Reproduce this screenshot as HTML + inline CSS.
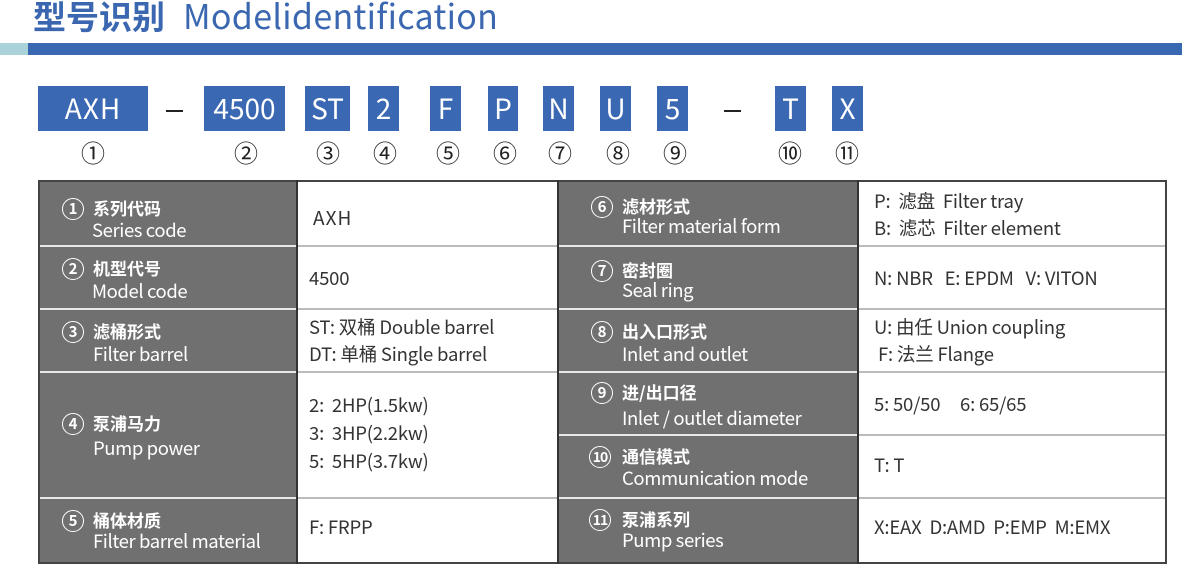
<!DOCTYPE html>
<html><head><meta charset="utf-8"><style>
*{margin:0;padding:0;box-sizing:border-box}
body{width:1182px;height:564px;background:#fff;position:relative;overflow:hidden;font-family:"Noto Sans CJK SC","Liberation Sans",sans-serif;color:#222}
.a{position:absolute;white-space:nowrap}
.box{position:absolute;top:86px;height:45px;background:#3a68b2;color:#fff;font-size:28px;line-height:45px;text-align:center}
.num{position:absolute;top:139px;font-size:24px;color:#222;line-height:26px}
.g{position:absolute;background:#707070;border-bottom:2px solid #e8e8e8}
.w{position:absolute;background:#fff;border-bottom:2px solid #bbb}
.c{position:absolute;width:22px;height:22px;border:1.2px solid #fff;border-radius:50%;color:#fff;font-size:15px;font-weight:bold;line-height:20px;text-align:center}
.zh{position:absolute;color:#fff;font-size:17px;font-weight:bold;line-height:20px}
.en{position:absolute;color:#fff;font-size:18.5px;line-height:20px;letter-spacing:-0.4px}
.t{position:absolute;font-size:18.5px;color:#333;line-height:27px;letter-spacing:-0.2px}
</style></head><body>
<div class="a" style="left:33px;top:-6px;font-size:33px;font-weight:bold;color:#3a67b0;line-height:42px">型号识别</div>
<div class="a" style="left:183px;top:-7px;font-size:34px;color:#3a67b0;line-height:44px;letter-spacing:0.3px">Modelidentification</div>
<div class="a" style="left:0;top:43px;width:28px;height:12px;background:#a9d3d9"></div>
<div class="a" style="left:28px;top:43px;width:1154px;height:12px;background:#3868b2"></div>

<div class="box" style="left:38px;width:110px;letter-spacing:1px">AXH</div>
<div class="a" style="left:166px;top:110px;width:17px;height:2px;background:#222"></div>
<div class="box" style="left:204px;width:81px">4500</div>
<div class="box" style="left:305px;width:45px">ST</div>
<div class="box" style="left:368px;width:31px">2</div>
<div class="box" style="left:430px;width:31px">F</div>
<div class="box" style="left:488px;width:30px">P</div>
<div class="box" style="left:543px;width:31px">N</div>
<div class="box" style="left:600px;width:31px">U</div>
<div class="box" style="left:657px;width:31px">5</div>
<div class="a" style="left:724px;top:110px;width:17px;height:2px;background:#222"></div>
<div class="box" style="left:775px;width:31px">T</div>
<div class="box" style="left:832px;width:31px">X</div>

<div class="num" style="left:81px">①</div>
<div class="num" style="left:234px">②</div>
<div class="num" style="left:316px">③</div>
<div class="num" style="left:373px">④</div>
<div class="num" style="left:436px">⑤</div>
<div class="num" style="left:493px">⑥</div>
<div class="num" style="left:548px">⑦</div>
<div class="num" style="left:606px">⑧</div>
<div class="num" style="left:663px">⑨</div>
<div class="num" style="left:778px">⑩</div>
<div class="num" style="left:835px">⑪</div>

<div class="a" style="left:38px;top:180px;width:1129px;height:384px;border:2px solid #444;background:#fff"></div>

<div class="g" style="left:40px;top:182px;width:256px;height:65px"></div>
<div class="g" style="left:40px;top:247px;width:256px;height:63px"></div>
<div class="g" style="left:40px;top:310px;width:256px;height:63px"></div>
<div class="g" style="left:40px;top:373px;width:256px;height:126px"></div>
<div class="g" style="left:40px;top:499px;width:256px;height:63px;border-bottom:none"></div>
<div class="a" style="left:296px;top:180px;width:2px;height:384px;background:#333"></div>
<div class="w" style="left:298px;top:182px;width:259px;height:65px"></div>
<div class="w" style="left:298px;top:247px;width:259px;height:63px"></div>
<div class="w" style="left:298px;top:310px;width:259px;height:63px"></div>
<div class="w" style="left:298px;top:373px;width:259px;height:126px"></div>
<div class="a" style="left:557px;top:180px;width:2px;height:384px;background:#333"></div>
<div class="g" style="left:559px;top:182px;width:298px;height:65px"></div>
<div class="g" style="left:559px;top:247px;width:298px;height:63px"></div>
<div class="g" style="left:559px;top:310px;width:298px;height:63px"></div>
<div class="g" style="left:559px;top:373px;width:298px;height:63px"></div>
<div class="g" style="left:559px;top:436px;width:298px;height:63px"></div>
<div class="g" style="left:559px;top:499px;width:298px;height:63px;border-bottom:none"></div>
<div class="a" style="left:857px;top:180px;width:2px;height:384px;background:#333"></div>
<div class="w" style="left:859px;top:182px;width:306px;height:65px"></div>
<div class="w" style="left:859px;top:247px;width:306px;height:63px"></div>
<div class="w" style="left:859px;top:310px;width:306px;height:63px"></div>
<div class="w" style="left:859px;top:373px;width:306px;height:63px"></div>
<div class="w" style="left:859px;top:436px;width:306px;height:63px"></div>

<div class="c" style="left:62px;top:198px">1</div><div class="zh" style="left:93px;top:198px">系列代码</div><div class="en" style="left:92px;top:220px">Series code</div>
<div class="c" style="left:62px;top:258px">2</div><div class="zh" style="left:93px;top:258px">机型代号</div><div class="en" style="left:92px;top:281px">Model code</div>
<div class="c" style="left:62px;top:321px">3</div><div class="zh" style="left:93px;top:321px">滤桶形式</div><div class="en" style="left:93px;top:344px">Filter barrel</div>
<div class="c" style="left:62px;top:413px">4</div><div class="zh" style="left:93px;top:413px">泵浦马力</div><div class="en" style="left:93px;top:438px">Pump power</div>
<div class="c" style="left:62px;top:510px">5</div><div class="zh" style="left:93px;top:510px">桶体材质</div><div class="en" style="left:93px;top:531px">Filter barrel material</div>

<div class="t" style="left:313px;top:204px;font-size:19px;letter-spacing:1px">AXH</div>
<div class="t" style="left:309px;top:265px">4500</div>
<div class="t" style="left:309px;top:314px">ST: 双桶 Double barrel</div>
<div class="t" style="left:309px;top:341px">DT: 单桶 Single barrel</div>
<div class="t" style="left:309px;top:392px">2:&nbsp; 2HP(1.5kw)</div>
<div class="t" style="left:309px;top:420px">3:&nbsp; 3HP(2.2kw)</div>
<div class="t" style="left:309px;top:448px">5:&nbsp; 5HP(3.7kw)</div>
<div class="t" style="left:309px;top:514px">F: FRPP</div>

<div class="c" style="left:591px;top:196px">6</div><div class="zh" style="left:622px;top:196px">滤材形式</div><div class="en" style="left:622px;top:216px">Filter material form</div>
<div class="c" style="left:591px;top:260px">7</div><div class="zh" style="left:622px;top:260px">密封圈</div><div class="en" style="left:622px;top:280px">Seal ring</div>
<div class="c" style="left:591px;top:321px">8</div><div class="zh" style="left:622px;top:321px">出入口形式</div><div class="en" style="left:622px;top:344px">Inlet and outlet</div>
<div class="c" style="left:591px;top:382px">9</div><div class="zh" style="left:622px;top:382px">进/出口径</div><div class="en" style="left:622px;top:408px">Inlet / outlet diameter</div>
<div class="c" style="left:589px;top:446px;font-size:14px;letter-spacing:-1px">10</div><div class="zh" style="left:622px;top:446px">通信模式</div><div class="en" style="left:622px;top:468px">Communication mode</div>
<div class="c" style="left:589px;top:509px;font-size:14px;letter-spacing:-1px">11</div><div class="zh" style="left:622px;top:509px">泵浦系列</div><div class="en" style="left:622px;top:530px">Pump series</div>

<div class="t" style="left:874px;top:188px">P:&nbsp; 滤盘&nbsp; Filter tray</div>
<div class="t" style="left:874px;top:215px">B:&nbsp; 滤芯&nbsp; Filter element</div>
<div class="t" style="left:874px;top:265px">N: NBR&nbsp;&nbsp; E: EPDM&nbsp;&nbsp; V: VITON</div>
<div class="t" style="left:874px;top:314px">U: 由任 Union coupling</div>
<div class="t" style="left:878px;top:341px">F: 法兰 Flange</div>
<div class="t" style="left:874px;top:391px">5: 50/50&nbsp;&nbsp;&nbsp;&nbsp; 6: 65/65</div>
<div class="t" style="left:874px;top:452px">T: T</div>
<div class="t" style="left:874px;top:514px">X:EAX&nbsp; D:AMD&nbsp; P:EMP&nbsp; M:EMX</div>
</body></html>
